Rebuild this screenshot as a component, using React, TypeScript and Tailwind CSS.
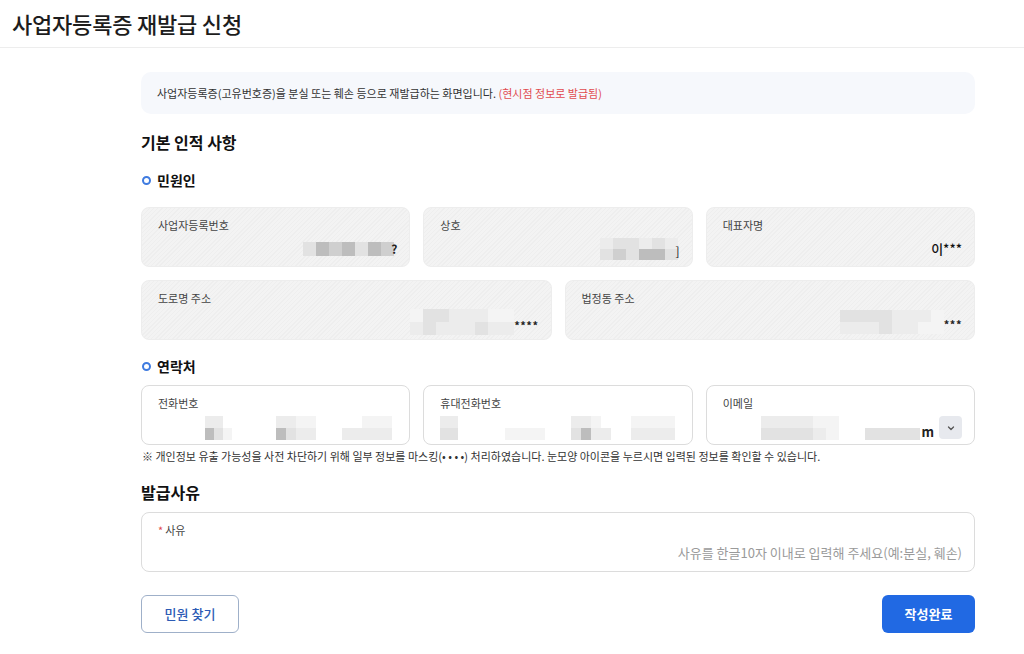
import React from 'react';

const FONT = "font-['Noto_Sans_CJK_KR','Noto_Sans',sans-serif]";

type Cell = string | null;

// mosaic patch: rows of cells
const Mosaic: React.FC<{ rows: Cell[][]; cell?: number; h?: number }> = ({ rows, cell = 13, h = 12 }) => (
  <div className="flex flex-col">
    {rows.map((r, i) => (
      <div key={i} className="flex">
        {r.map((c, j) => (
          <div key={j} style={{ width: cell, height: h, background: c ?? 'transparent' }} />
        ))}
      </div>
    ))}
  </div>
);

const hatch =
  'bg-[repeating-linear-gradient(135deg,#f3f3f3_0px,#f3f3f3_2px,#eeeeee_2px,#eeeeee_3px)]';

const ReadCard: React.FC<{ label: string; children: React.ReactNode }> = ({ label, children }) => (
  <div className={`h-[60px] rounded-[8px] border border-[#ededed] ${hatch} px-4 pt-[9px] pr-3 flex flex-col`}>
    <span className="text-[11px] leading-[16px] text-[#444]">{label}</span>
    <div className="flex-1 flex items-center justify-end pb-[2px]">{children}</div>
  </div>
);

const InputCard: React.FC<{ label: React.ReactNode; children?: React.ReactNode }> = ({ label, children }) => (
  <div className="h-[60px] rounded-[8px] border border-[#dcdcdc] bg-white px-4 pt-[9px] pr-3 flex flex-col">
    <span className="text-[11px] leading-[16px] text-[#444]">{label}</span>
    <div className="flex-1 flex items-center justify-end">{children}</div>
  </div>
);

const SubTitle: React.FC<{ children: React.ReactNode; className?: string }> = ({ children, className }) => (
  <div className={`flex items-center gap-[6px] pl-[1px] ${className ?? ''}`}>
    <span className="w-[9px] h-[9px] rounded-full border-[2px] border-[#3f7be0]" />
    <span className="text-[14px] leading-[21px] font-bold text-[#111]">{children}</span>
  </div>
);

const a = '#cfcfcf';
const b = '#bdbdbd';
const c = '#e2e2e2';
const e = '#ececec';
const f = '#f4f4f4';

export default function App() {
  return (
    <div className={`${FONT} w-[1024px] h-[654px] bg-white text-[#222] overflow-hidden`}>
      <div className="h-[48px] border-b border-[#ededed] pl-3 flex items-center">
        <h1 className="text-[22px] font-medium tracking-[-0.2px] text-[#1d1d1d]">사업자등록증 재발급 신청</h1>
      </div>

      <div className="ml-[141px] w-[834px]">
        <div className="mt-6 h-[42px] rounded-[10px] bg-[#f6f8fc] px-4 flex items-center text-[11px] text-[#333]">
          사업자등록증(고유번호증)을 분실 또는 훼손 등으로 재발급하는 화면입니다.&nbsp;
          <span className="text-[#e14b4f]">(현시점 정보로 발급됨)</span>
        </div>

        <h2 className="mt-4 text-[16px] leading-[24px] font-semibold text-[#111]">기본 인적 사항</h2>

        <SubTitle className="mt-4">민원인</SubTitle>

        <div className="mt-4 grid grid-cols-3 gap-[13px]">
          <ReadCard label="사업자등록번호">
            <div className="flex items-center">
              <Mosaic rows={[[c, b, a, b, c, b, a]]} cell={13} h={14} />
              <span className="text-[12px] font-semibold -ml-[3px]">?</span>
            </div>
          </ReadCard>
          <ReadCard label="상호">
            <div className="flex items-end">
              <Mosaic rows={[[e, c, c, e, c, e], [c, a, c, b, b, c]]} cell={13} h={11} />
              <span className="text-[12px] -ml-[2px]">]</span>
            </div>
          </ReadCard>
          <ReadCard label="대표자명">
            <span className="text-[13px] font-medium text-[#111]">이***</span>
          </ReadCard>
        </div>

        <div className="mt-[13px] grid grid-cols-2 gap-[13px]">
          <ReadCard label="도로명 주소">
            <div className="flex items-end">
              <Mosaic rows={[[f, c, c, e, e, e, f, f], [e, c, e, e, e, c, e, e]]} cell={13} h={13} />
              <span className="text-[11px] font-semibold tracking-[0.5px] mb-[1px]">****</span>
            </div>
          </ReadCard>
          <ReadCard label="법정동 주소">
            <div className="flex items-end">
              <Mosaic rows={[[c, c, c, c, e, e, e, f], [e, e, e, c, e, e, f, f]]} cell={13} h={12} />
              <span className="text-[11px] font-semibold tracking-[0.5px] mb-[1px]">***</span>
            </div>
          </ReadCard>
        </div>

        <SubTitle className="mt-4">연락처</SubTitle>

        <div className="mt-2 grid grid-cols-3 gap-[13px]">
          <InputCard label="전화번호">
            <div className="flex items-end gap-0 w-full pl-[47px]">
              <Mosaic rows={[[e, e, null], [b, c, f]]} cell={9} h={12} />
              <div className="w-[44px]" />
              <Mosaic rows={[[e, e, f, f], [b, c, e, e]]} cell={10} h={12} />
              <div className="w-[26px]" />
              <Mosaic rows={[[null, null, f, f, f], [e, e, e, e, e]]} cell={10} h={12} />
            </div>
          </InputCard>
          <InputCard label="휴대전화번호">
            <div className="flex items-end w-full">
              <Mosaic rows={[[e, e, null], [c, c, null]]} cell={9} h={12} />
              <div className="w-[38px]" />
              <Mosaic rows={[[null, null, null, null], [f, f, f, f]]} cell={10} h={12} />
              <div className="w-[26px]" />
              <Mosaic rows={[[e, e, f, null], [c, b, e, e]]} cell={10} h={12} />
              <div className="w-[20px]" />
              <Mosaic rows={[[f, f, f, f], [e, e, e, e]]} cell={11} h={12} />
            </div>
          </InputCard>
          <InputCard label="이메일">
            <div className="flex items-end">
              <Mosaic rows={[[e, e, e, e, f, f], [c, c, c, c, e, f]]} cell={13} h={12} />
              <div className="w-[26px]" />
              <Mosaic rows={[[null, null, null, null, null], [c, c, c, c, c]]} cell={11} h={12} />
              <span className="text-[13px] font-semibold mb-[-2px] ml-[1px]">m</span>
            </div>
            <button className="ml-[5px] w-[23px] h-[23px] rounded-[4px] bg-[#e7e9ee] flex items-center justify-center">
              <svg width="10" height="10" viewBox="0 0 10 10" fill="none">
                <path d="M2.5 4 L5 6.5 L7.5 4" stroke="#555" strokeWidth="1.3" strokeLinecap="round" strokeLinejoin="round" />
              </svg>
            </button>
          </InputCard>
        </div>

        <p className="mt-1 text-[11px] leading-[15px] text-[#333] pl-[1px] whitespace-nowrap">
          ※ 개인정보 유출 가능성을 사전 차단하기 위해 일부 정보를 마스킹(• • • •) 처리하였습니다. 눈모양 아이콘을 누르시면 입력된 정보를 확인할 수 있습니다.
        </p>

        <h2 className="mt-4 text-[16px] leading-[24px] font-semibold text-[#111]">발급사유</h2>

        <div className="mt-2 h-[60px] rounded-[8px] border border-[#dcdcdc] bg-white px-4 pt-[9px] pr-3 flex flex-col">
          <span className="text-[11px] leading-[16px] text-[#444]">
            <span className="text-[#e14b4f] mr-[2px]">*</span>사유
          </span>
          <input
            className="mt-[5px] w-full text-right text-[13px] outline-none placeholder:text-[#9a9a9a] bg-transparent"
            placeholder="사유를 한글10자 이내로 입력해 주세요(예:분실, 훼손)"
          />
        </div>

        <div className="mt-[23px] flex items-center justify-between">
          <button className="w-[98px] h-[38px] rounded-[6px] border border-[#9fb0c9] bg-white text-[13px] font-medium text-[#2c5bb5]">
            민원 찾기
          </button>
          <button className="w-[93px] h-[38px] rounded-[6px] bg-[#2169e3] text-[13px] font-semibold text-white">
            작성완료
          </button>
        </div>
      </div>
    </div>
  );
}
